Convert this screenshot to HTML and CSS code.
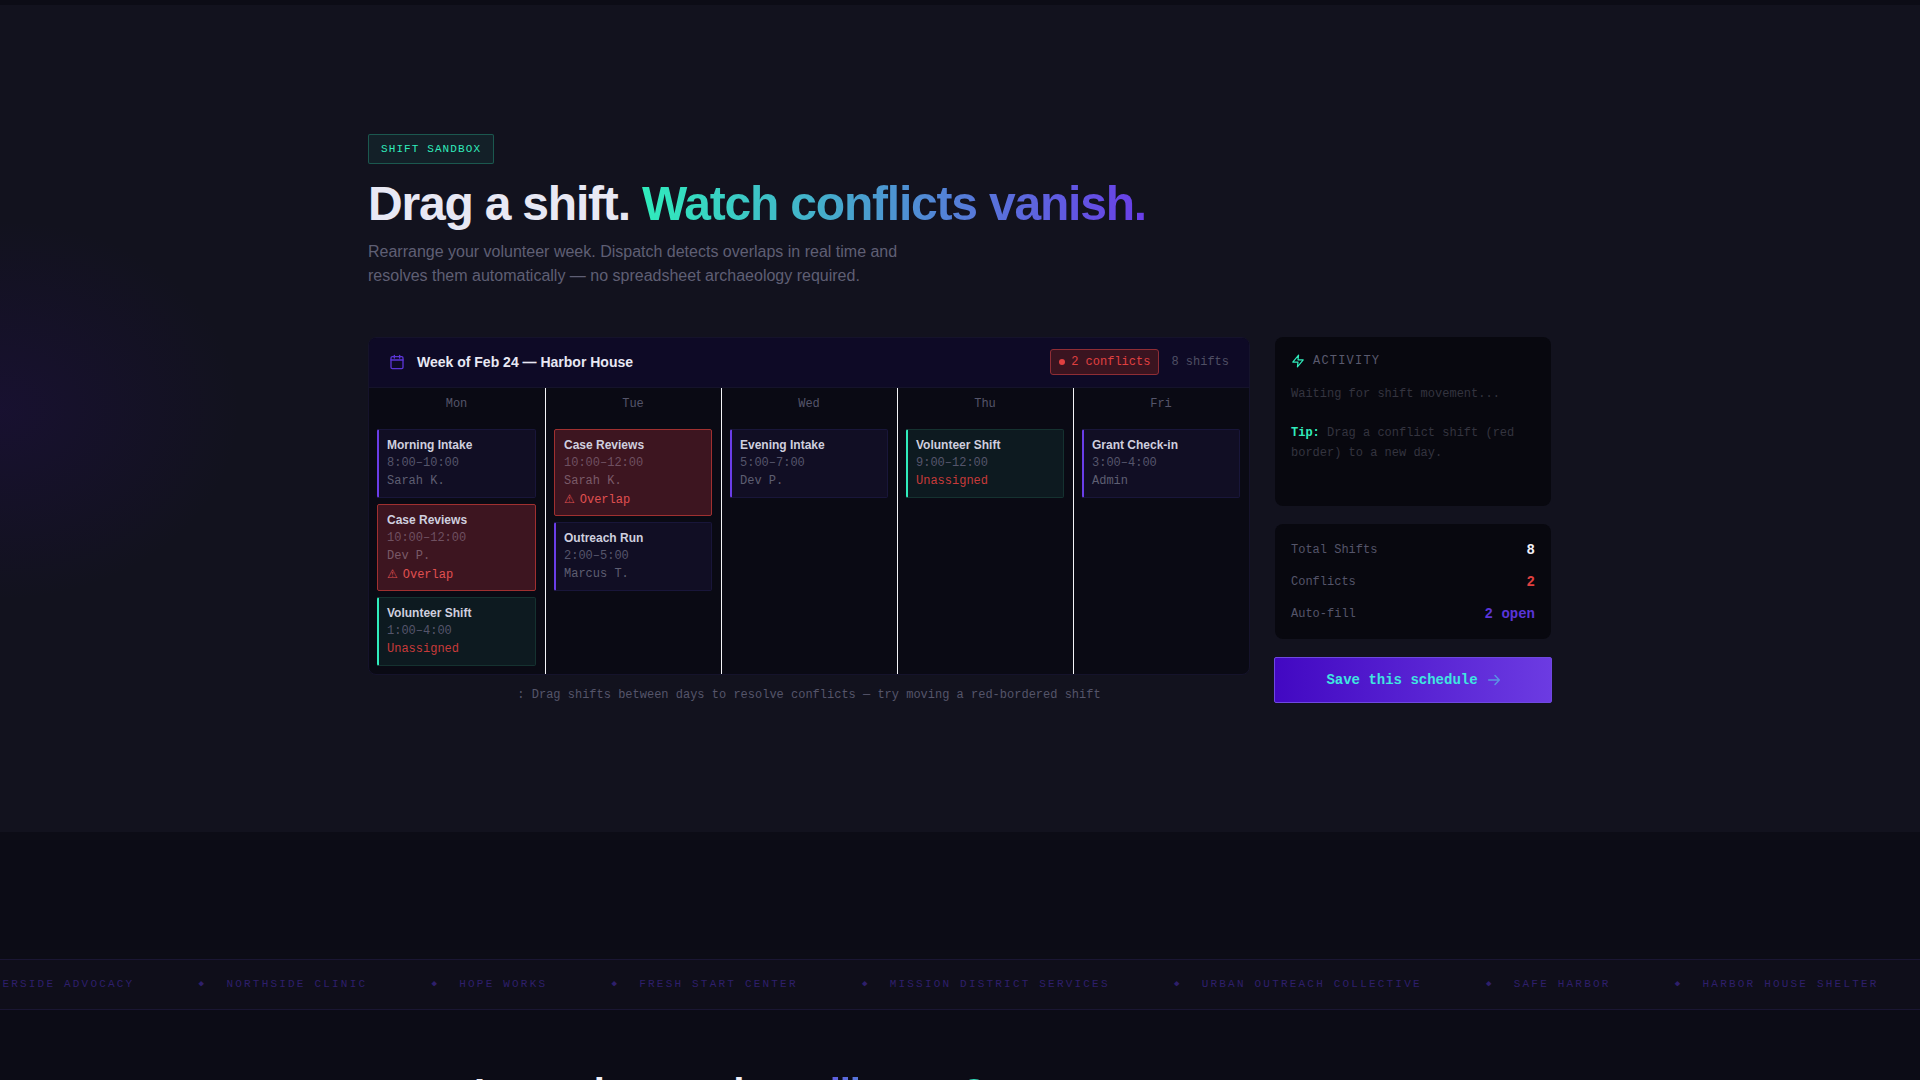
FILE: index.html
```html
<!DOCTYPE html>
<html lang="en">
<head>
  <meta charset="UTF-8" />
  <meta name="viewport" content="width=device-width, initial-scale=1.0"/>
  <title>Dispatch - Shift Sandbox</title>
  <link rel="stylesheet" href="styles.css">
</head>
<body>
  <div class="top-strip"></div>

  <!-- Hero -->
  <section class="hero">
    <div class="wrap">
      <div class="badge">SHIFT SANDBOX</div>
      <h1>Drag a shift. <span class="grad">Watch conflicts vanish.</span></h1>
      <p class="sub">Rearrange your volunteer week. Dispatch detects overlaps in real time and<br>resolves them automatically — no spreadsheet archaeology required.</p>

      <div class="sandbox">
        <div class="left-col">
          <div class="calendar">
            <div class="cal-head">
              <div class="cal-title">
                <svg class="cal-icon" viewBox="0 0 24 24" fill="none" stroke="currentColor" stroke-width="2" stroke-linecap="round" stroke-linejoin="round"><rect x="3" y="4" width="18" height="18" rx="2"/><path d="M16 2v4M8 2v4M3 9h18"/></svg>
                <span>Week of Feb 24 — Harbor House</span>
              </div>
              <div class="cal-meta">
                <span class="conflict-pill"><i class="dot"></i>2 conflicts</span>
                <span class="count">8 shifts</span>
              </div>
            </div>
            <div class="days">
              <div class="day">
                <div class="day-name">Mon</div>
                <div class="shift">
                  <div class="s-title">Morning Intake</div>
                  <div class="s-time">8:00–10:00</div>
                  <div class="s-who">Sarah K.</div>
                </div>
                <div class="shift conflict">
                  <div class="s-title">Case Reviews</div>
                  <div class="s-time">10:00–12:00</div>
                  <div class="s-who">Dev P.</div>
                  <div class="s-warn"><span class="warn-icon">⚠</span>Overlap</div>
                </div>
                <div class="shift teal">
                  <div class="s-title">Volunteer Shift</div>
                  <div class="s-time">1:00–4:00</div>
                  <div class="s-open">Unassigned</div>
                </div>
              </div>
              <div class="day">
                <div class="day-name">Tue</div>
                <div class="shift conflict">
                  <div class="s-title">Case Reviews</div>
                  <div class="s-time">10:00–12:00</div>
                  <div class="s-who">Sarah K.</div>
                  <div class="s-warn"><span class="warn-icon">⚠</span>Overlap</div>
                </div>
                <div class="shift">
                  <div class="s-title">Outreach Run</div>
                  <div class="s-time">2:00–5:00</div>
                  <div class="s-who">Marcus T.</div>
                </div>
              </div>
              <div class="day">
                <div class="day-name">Wed</div>
                <div class="shift">
                  <div class="s-title">Evening Intake</div>
                  <div class="s-time">5:00–7:00</div>
                  <div class="s-who">Dev P.</div>
                </div>
              </div>
              <div class="day">
                <div class="day-name">Thu</div>
                <div class="shift teal">
                  <div class="s-title">Volunteer Shift</div>
                  <div class="s-time">9:00–12:00</div>
                  <div class="s-open">Unassigned</div>
                </div>
              </div>
              <div class="day">
                <div class="day-name">Fri</div>
                <div class="shift">
                  <div class="s-title">Grant Check-in</div>
                  <div class="s-time">3:00–4:00</div>
                  <div class="s-who">Admin</div>
                </div>
              </div>
            </div>
          </div>
          <p class="hint">: Drag shifts between days to resolve conflicts — try moving a red-bordered shift</p>
        </div>

        <div class="right-col">
          <div class="panel activity">
            <div class="panel-head">
              <svg class="zap" viewBox="0 0 24 24" fill="none" stroke="currentColor" stroke-width="2" stroke-linecap="round" stroke-linejoin="round"><path d="M13 2 3 14h9l-1 8 10-12h-9l1-8z"/></svg>
              ACTIVITY
            </div>
            <p class="log">Waiting for shift movement...</p>
            <p class="log tip"><b>Tip:</b> Drag a conflict shift (red border) to a new day.</p>
          </div>
          <div class="panel stats">
            <div class="stat"><span>Total Shifts</span><b>8</b></div>
            <div class="stat"><span>Conflicts</span><b class="red">2</b></div>
            <div class="stat"><span>Auto-fill</span><b class="purple">2 open</b></div>
          </div>
          <button class="save-btn">Save this schedule
            <svg class="arrow" viewBox="0 0 12 12" fill="none" stroke="currentColor" stroke-width="1.4" stroke-linecap="round" stroke-linejoin="round"><path d="M.7 6h10.6M7 1.6 11.3 6 7 10.4"/></svg>
          </button>
        </div>
      </div>
    </div>
  </section>

  <!-- Partner marquee -->
  <section class="lower">
    <div class="marquee">
      <div class="track">
        <span>RIVERSIDE ADVOCACY</span><i>◆</i>
        <span>NORTHSIDE CLINIC</span><i>◆</i>
        <span>HOPE WORKS</span><i>◆</i>
        <span>FRESH START CENTER</span><i>◆</i>
        <span>MISSION DISTRICT SERVICES</span><i>◆</i>
        <span>URBAN OUTREACH COLLECTIVE</span><i>◆</i>
        <span>SAFE HARBOR</span><i>◆</i>
        <span>HARBOR HOUSE SHELTER</span>
      </div>
    </div>
    <h2 class="next-title">Is one hour a day <span class="grad-rev">still open?</span></h2>
  </section>
</body>
</html>
```

FILE: styles.css
```css
:root {
  --bg: #12121e;
  --bg-dark: #0c0c16;
  --panel: #08080f;
  --teal: #30ecbc;
  --purple: #6a3de8;
  --red: #e04040;
  --mono: 'Liberation Mono', monospace;
  --sans: 'Liberation Sans', sans-serif;
}

* { box-sizing: border-box; }

html, body { height: 1080px; overflow: hidden; }

body {
  margin: 0;
  background: var(--bg-dark);
  font-family: var(--sans);
  color: #e8e8f0;
}

.top-strip {
  height: 5px;
  background: var(--bg-dark);
}

.hero {
  height: 827px;
  padding-top: 129px;
  background:
    radial-gradient(ellipse 240px 190px at 0 405px, rgba(50, 10, 130, 0.18), transparent),
    var(--bg);
}

.wrap {
  width: 1184px;
  margin: 0 auto;
}

.badge {
  display: inline-block;
  font-family: var(--mono);
  font-size: 11px;
  line-height: 16px;
  letter-spacing: 1.1px;
  color: var(--teal);
  background: rgba(46, 232, 181, 0.07);
  border: 1px solid rgba(46, 232, 181, 0.28);
  border-radius: 2px;
  padding: 6px 12px;
  vertical-align: top;
}

h1 {
  margin: 13px 0 0;
  font-size: 48px;
  line-height: 54px;
  font-weight: 700;
  letter-spacing: -1.2px;
  color: #e8e8f4;
}

.grad {
  background: linear-gradient(90deg, var(--teal), var(--purple));
  -webkit-background-clip: text;
  background-clip: text;
  color: transparent;
}

.sub {
  margin: 9px 0 0;
  font-size: 16px;
  line-height: 24px;
  color: #5f5f74;
}

.sandbox {
  display: grid;
  grid-template-columns: 1fr 278px;
  column-gap: 24px;
  margin-top: 49px;
}

.calendar {
  border: 1px solid #15132b;
  border-radius: 8px;
  overflow: hidden;
  background: #0a0a14;
}

.cal-head {
  display: flex;
  justify-content: space-between;
  align-items: center;
  height: 50px;
  padding: 0 20px 2px;
  background: #0e0a26;
  border-bottom: 1px solid #15132b;
}

.cal-title {
  display: flex;
  align-items: center;
  gap: 12px;
  font-size: 14px;
  font-weight: 700;
  color: #e8e8f4;
}

.cal-icon {
  width: 16px;
  height: 16px;
  color: #5b35d5;
}

.cal-meta {
  display: flex;
  align-items: center;
  gap: 12px;
  font-family: var(--mono);
  font-size: 12px;
}

.conflict-pill {
  display: flex;
  align-items: center;
  gap: 6px;
  height: 26px;
  padding: 0 8px;
  color: var(--red);
  background: #3a1420;
  border: 1px solid #8f2d35;
  border-radius: 3px;
}

.dot {
  width: 6px;
  height: 6px;
  border-radius: 50%;
  background: var(--red);
}

.count { color: #4f4f64; }

.days {
  display: grid;
  grid-template-columns: 177px repeat(3, 176px) 1fr;
  height: 286px;
}

.day {
  padding: 0 9px 8px 8px;
  border-right: 1px solid #f4f4f8;
  display: flex;
  flex-direction: column;
  gap: 6px;
}

.day:last-child { border-right: none; }

.day-name {
  font-family: var(--mono);
  font-size: 12px;
  line-height: 18px;
  text-align: center;
  color: #55556a;
  margin: 7px 0 10px;
}

.shift {
  padding: 7px 8px;
  background: #110e24;
  border: 1px solid #19163a;
  border-left: 2px solid var(--purple);
  border-radius: 2px;
  font-family: var(--mono);
  font-size: 12px;
  line-height: 18px;
  color: #5e5e72;
}

.shift.teal {
  background: #0d1a20;
  border-color: #153230;
  border-left-color: var(--teal);
}

.shift.conflict {
  background: #3d1520;
  border: 1px solid #a03030;
  padding: 7px 8px 6px 9px;
}

.s-title {
  font-family: var(--sans);
  font-weight: 700;
  line-height: 17px;
  color: #cfcfdf;
}

.s-time { color: #55556b; }
.conflict .s-time { color: #6f5060; }
.conflict .s-who { color: #7a5a68; }
.s-warn { color: #e05050; }
.s-open { color: #c83a3a; }

.warn-icon {
  font-family: 'DejaVu Sans', sans-serif;
  margin-right: 5px;
}

.hint {
  margin: 11px 0 0;
  font-family: var(--mono);
  font-size: 12px;
  line-height: 18px;
  text-align: center;
  color: #55556a;
}

.right-col {
  display: flex;
  flex-direction: column;
}

.panel {
  margin: 0 1px;
  background: var(--panel);
  border-radius: 8px;
  font-family: var(--mono);
  font-size: 12px;
}

.activity {
  height: 169px;
  padding: 16px;
  margin-bottom: 18px;
}

.panel-head {
  display: flex;
  align-items: center;
  gap: 8px;
  line-height: 16px;
  letter-spacing: 1.2px;
  color: #5a5a6e;
}

.zap {
  width: 14px;
  height: 14px;
  color: var(--teal);
}

.log {
  margin: 15px 0 0;
  line-height: 20px;
  color: #34343f;
}

.log.tip { margin-top: 19px; }
.tip b { color: var(--teal); }

.stats {
  height: 115px;
  padding: 18px 16px 16px;
  display: flex;
  flex-direction: column;
  gap: 16px;
  margin-bottom: 18px;
}

.stat {
  display: flex;
  justify-content: space-between;
  align-items: center;
  line-height: 16px;
  color: #55556a;
}

.stat b {
  font-size: 14px;
  color: #f0f0f8;
}

.stat b.red { color: var(--red); }
.stat b.purple { color: #5a35d8; }

.save-btn {
  display: flex;
  align-items: center;
  justify-content: center;
  gap: 10px;
  height: 46px;
  width: 100%;
  font-family: var(--mono);
  font-size: 14px;
  font-weight: 700;
  color: #3fe6e0;
  background: linear-gradient(90deg, #4208c2, #6c3be2);
  border: 1px solid #6f48e0;
  border-radius: 2px;
}

.arrow {
  width: 12px;
  height: 12px;
  color: #5a94e4;
}

.lower {
  padding-top: 127px;
  background: var(--bg-dark);
}

.marquee {
  height: 51px;
  padding-bottom: 2px;
  display: flex;
  align-items: center;
  overflow: hidden;
  background: #0f0e1a;
  border-top: 1px solid #1a1633;
  border-bottom: 1px solid #1a1633;
}

.track {
  display: flex;
  align-items: center;
  flex: none;
  transform: translateX(-24px);
  font-family: var(--mono);
  font-size: 11px;
  letter-spacing: 2.2px;
  white-space: nowrap;
  color: #2e1f6b;
}

.track i {
  font-style: normal;
  font-size: 9px;
  margin: 0 20.2px 0 64.2px;
}

.next-title {
  margin: 59px 0 0 474px;
  font-size: 40px;
  line-height: 48px;
  font-weight: 700;
  letter-spacing: -1px;
  color: #f0f0f8;
  white-space: nowrap;
}

.grad-rev {
  background: linear-gradient(90deg, var(--purple), var(--teal));
  -webkit-background-clip: text;
  background-clip: text;
  color: transparent;
}
```
